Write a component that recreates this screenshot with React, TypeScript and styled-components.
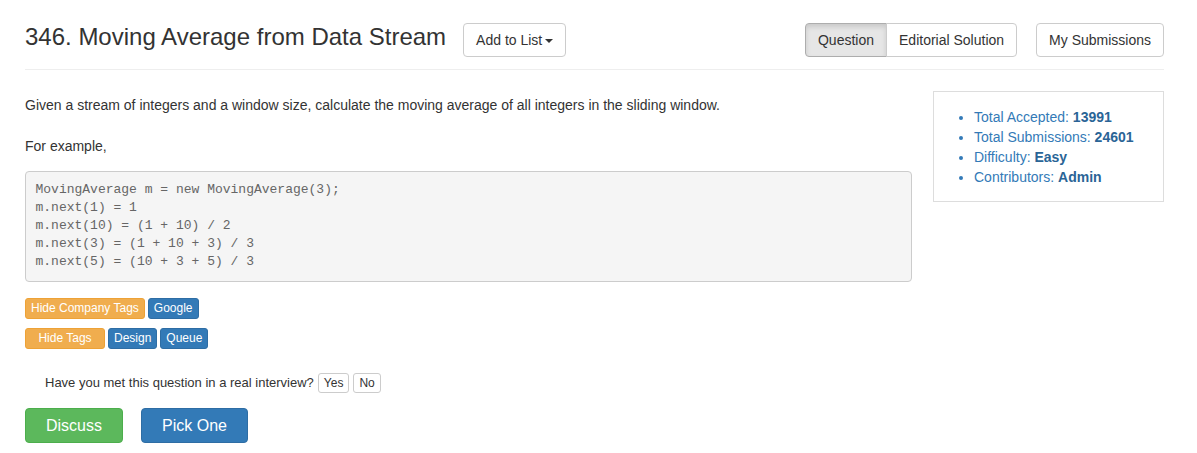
import React from "react";
import styled, { createGlobalStyle, css } from "styled-components";

const GlobalStyle = createGlobalStyle`
  body {
    margin: 0;
    background: #fff;
    font-family: "Liberation Sans", Arial, sans-serif;
    font-size: 14px;
    line-height: 1.42857;
    color: #333;
  }
`;

const Page = styled.div`
  padding: 23px 33px 0 25px;
`;

const Header = styled.div`
  display: flex;
  align-items: center;
  height: 34px;
`;

const Title = styled.h3`
  margin: 0 17px 0 0;
  font-size: 24px;
  font-weight: 500;
  line-height: 1.1;
  color: #333;
  position: relative;
  top: -3px;
`;

const Button = styled.button<{ active?: boolean }>`
  font-family: inherit;
  font-size: 14px;
  line-height: 20px;
  padding: 6px 12px;
  color: #333;
  background: #fff;
  border: 1px solid #ccc;
  border-radius: 4px;
  cursor: pointer;
  white-space: nowrap;
  ${(p) =>
    p.active &&
    css`
      background: #e6e6e6;
      border-color: #adadad;
      box-shadow: inset 0 3px 5px rgba(0, 0, 0, 0.125);
    `}
`;

const Caret = styled.span`
  display: inline-block;
  width: 0;
  height: 0;
  margin-left: 3px;
  vertical-align: middle;
  border-top: 4px solid #333;
  border-left: 4px solid transparent;
  border-right: 4px solid transparent;
`;

const Spacer = styled.div`
  flex: 1;
`;

const Group = styled.div`
  display: flex;
  margin-right: 19px;

  & > button:first-child {
    border-top-right-radius: 0;
    border-bottom-right-radius: 0;
  }
  & > button:last-child {
    border-top-left-radius: 0;
    border-bottom-left-radius: 0;
    margin-left: -1px;
  }
`;

const Rule = styled.hr`
  margin: 12px 0 0;
  border: 0;
  border-top: 1px solid #eee;
`;

const Content = styled.div`
  display: flex;
  gap: 21px;
  margin-top: 21px;
  align-items: flex-start;
`;

const Main = styled.div`
  width: 887px;
`;

const Para = styled.p`
  margin: 5px 0 21px;
`;

const Pre = styled.pre`
  margin: -7px 0 0;
  padding: 9.5px;
  font-family: "Liberation Mono", "Courier New", monospace;
  font-size: 13px;
  line-height: 18px;
  color: #666;
  background: #f5f5f5;
  border: 1px solid #ccc;
  border-radius: 4px;
`;

const TagRow = styled.div<{ top: number }>`
  display: flex;
  gap: 3px;
  margin-top: ${(p) => p.top}px;
`;

const Tag = styled.span<{ warn?: boolean; wide?: boolean }>`
  display: inline-block;
  font-size: 12px;
  line-height: 19px;
  padding: 0 5px;
  color: #fff;
  border-radius: 3px;
  text-align: center;
  background: ${(p) => (p.warn ? "#f0ad4e" : "#337ab7")};
  border: 1px solid ${(p) => (p.warn ? "#eea236" : "#2e6da4")};
  min-width: ${(p) => (p.wide ? "68px" : "auto")};
`;

const Interview = styled.div`
  display: flex;
  align-items: center;
  margin: 24px 0 0 20px;
  font-size: 13px;
  gap: 4px;
`;

const SmallButton = styled.button`
  font-family: inherit;
  font-size: 12px;
  line-height: 18px;
  padding: 0 5px;
  color: #333;
  background: #fff;
  border: 1px solid #ccc;
  border-radius: 3px;
`;

const Actions = styled.div`
  display: flex;
  gap: 18px;
  margin-top: 15px;
`;

const BigButton = styled.button<{ green?: boolean }>`
  font-family: inherit;
  font-size: 16px;
  line-height: 21px;
  padding: 6px 20px;
  color: #fff;
  border-radius: 4px;
  background: ${(p) => (p.green ? "#5cb85c" : "#337ab7")};
  border: 1px solid ${(p) => (p.green ? "#4cae4c" : "#2e6da4")};
`;

const Stats = styled.div`
  width: 229px;
  border: 1px solid #ddd;
  padding: 15px 0 14px;
`;

const StatList = styled.ul`
  margin: 0;
  padding-left: 40px;
  color: #337ab7;
  line-height: 20px;

  b {
    color: #2a6496;
  }
`;

const App = () => {
  return (
    <Page>
      <GlobalStyle />
      <Header>
        <Title>346. Moving Average from Data Stream</Title>
        <Button>
          Add to List
          <Caret />
        </Button>
        <Spacer />
        <Group>
          <Button active>Question</Button>
          <Button>Editorial Solution</Button>
        </Group>
        <Button>My Submissions</Button>
      </Header>
      <Rule />
      <Content>
        <Main>
          <Para>
            Given a stream of integers and a window size, calculate the moving
            average of all integers in the sliding window.
          </Para>
          <Para>For example,</Para>
          <Pre>
            {`MovingAverage m = new MovingAverage(3);
m.next(1) = 1
m.next(10) = (1 + 10) / 2
m.next(3) = (1 + 10 + 3) / 3
m.next(5) = (10 + 3 + 5) / 3`}
          </Pre>
          <TagRow top={16}>
            <Tag warn>Hide Company Tags</Tag>
            <Tag>Google</Tag>
          </TagRow>
          <TagRow top={9}>
            <Tag warn wide>
              Hide Tags
            </Tag>
            <Tag>Design</Tag>
            <Tag>Queue</Tag>
          </TagRow>
          <Interview>
            Have you met this question in a real interview?
            <SmallButton>Yes</SmallButton>
            <SmallButton>No</SmallButton>
          </Interview>
          <Actions>
            <BigButton green>Discuss</BigButton>
            <BigButton>Pick One</BigButton>
          </Actions>
        </Main>
        <Stats>
          <StatList>
            <li>
              Total Accepted: <b>13991</b>
            </li>
            <li>
              Total Submissions: <b>24601</b>
            </li>
            <li>
              Difficulty: <b>Easy</b>
            </li>
            <li>
              Contributors: <b>Admin</b>
            </li>
          </StatList>
        </Stats>
      </Content>
    </Page>
  );
};

export default App;
